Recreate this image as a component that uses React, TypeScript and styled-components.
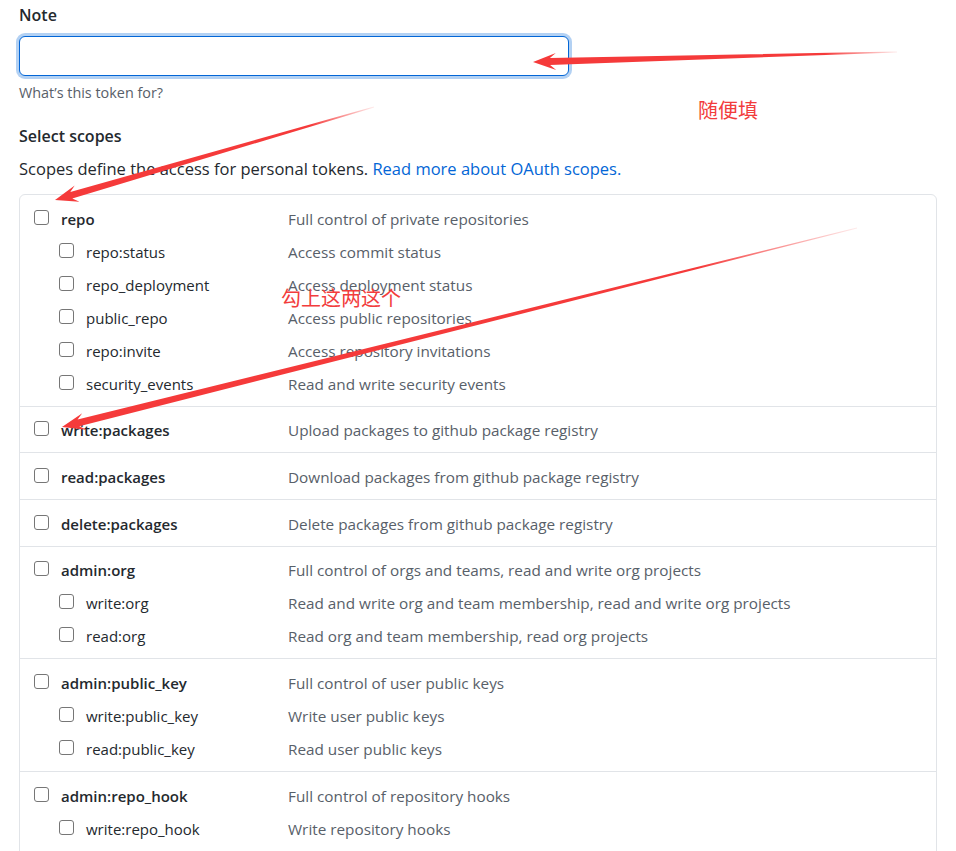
import React from 'react';
import styled, { createGlobalStyle } from 'styled-components';

type Scope = { name: string; desc: string; children?: [string, string][] };

const scopes: Scope[] = [
  {
    name: 'repo',
    desc: 'Full control of private repositories',
    children: [
      ['repo:status', 'Access commit status'],
      ['repo_deployment', 'Access deployment status'],
      ['public_repo', 'Access public repositories'],
      ['repo:invite', 'Access repository invitations'],
      ['security_events', 'Read and write security events'],
    ],
  },
  { name: 'write:packages', desc: 'Upload packages to github package registry' },
  { name: 'read:packages', desc: 'Download packages from github package registry' },
  { name: 'delete:packages', desc: 'Delete packages from github package registry' },
  {
    name: 'admin:org',
    desc: 'Full control of orgs and teams, read and write org projects',
    children: [
      ['write:org', 'Read and write org and team membership, read and write org projects'],
      ['read:org', 'Read org and team membership, read org projects'],
    ],
  },
  {
    name: 'admin:public_key',
    desc: 'Full control of user public keys',
    children: [
      ['write:public_key', 'Write user public keys'],
      ['read:public_key', 'Read user public keys'],
    ],
  },
  {
    name: 'admin:repo_hook',
    desc: 'Full control of repository hooks',
    children: [
      ['write:repo_hook', 'Write repository hooks'],
      ['read:repo_hook', 'Read repository hooks'],
    ],
  },
];

const GlobalStyle = createGlobalStyle`
  body {
    margin: 0;
    background: #fff;
    font-family: "Open Sans", "Liberation Sans", sans-serif;
    color: #24292e;
  }
`;

const Page = styled.div`
  position: relative;
  width: 956px;
  height: 851px;
  overflow: hidden;
  padding: 0 19px;
  box-sizing: border-box;
`;

const Label = styled.div<{ $top: number }>`
  margin-top: ${(p) => p.$top}px;
  font-size: 16px;
  font-weight: 600;
  line-height: 24px;
`;

const NoteInput = styled.input`
  display: block;
  margin-top: 9px;
  width: 550px;
  height: 40px;
  box-sizing: border-box;
  border: 1px solid #0366d6;
  border-radius: 6px;
  box-shadow: 0 0 0 3px rgba(3, 102, 214, 0.3);
  outline: none;
  font: inherit;
  padding: 0 10px;
`;

const Hint = styled.p`
  margin: 6px 0 0;
  font-size: 14.4px;
  line-height: 22px;
  color: #586069;
`;

const Lead = styled.p`
  margin: 9px 0 0;
  font-size: 16.5px;
  line-height: 24px;
`;

const Link = styled.a`
  color: #0366d6;
  text-decoration: none;
`;

const ScopeTable = styled.div`
  margin-top: 13px;
  border: 1px solid #e1e4e8;
  border-radius: 6px;
`;

const Group = styled.div`
  padding: 7px 0 5.7px 14px;
  & + & {
    border-top: 1px solid #e1e4e8;
  }
`;

const Row = styled.div`
  display: flex;
  align-items: center;
  height: 33px;
  font-size: 15px;
`;

const NameCell = styled.label<{ $child?: boolean }>`
  display: flex;
  align-items: center;
  gap: 12px;
  width: 254px;
  padding-left: ${(p) => (p.$child ? 25 : 0)}px;
  box-sizing: border-box;
  font-weight: ${(p) => (p.$child ? 400 : 600)};
  color: #24292e;
`;

const Box = styled.input`
  appearance: none;
  margin: 0 0 3px;
  width: 15px;
  height: 15px;
  border: 1px solid #767676;
  border-radius: 3px;
  background: #fff;
  flex-shrink: 0;
`;

const Desc = styled.span`
  font-size: 15.3px;
  color: #586069;
`;

const Overlay = styled.svg`
  position: absolute;
  left: 0;
  top: 0;
  pointer-events: none;
`;

const Remark = styled.span<{ $x: number; $y: number }>`
  position: absolute;
  left: ${(p) => p.$x}px;
  top: ${(p) => p.$y}px;
  font-family: "Noto Sans CJK SC", sans-serif;
  font-size: 20px;
  line-height: 1;
  color: #f23c3c;
`;

type Pt = [number, number];

function arrow(tail: Pt, tip: Pt, headLen: number, headW: number, shaftW: number) {
  const dx = tip[0] - tail[0];
  const dy = tip[1] - tail[1];
  const len = Math.hypot(dx, dy);
  const ux = dx / len;
  const uy = dy / len;
  const nx = -uy;
  const ny = ux;
  const bx = tip[0] - ux * headLen;
  const by = tip[1] - uy * headLen;
  const wx = bx + ux * 4;
  const wy = by + uy * 4;
  const pts: Pt[] = [
    [tail[0] + nx * 0.4, tail[1] + ny * 0.4],
    [wx + (nx * shaftW) / 2, wy + (ny * shaftW) / 2],
    [bx - ux * 2 + (nx * headW) / 2, by - uy * 2 + (ny * headW) / 2],
    tip,
    [bx - ux * 2 - (nx * headW) / 2, by - uy * 2 - (ny * headW) / 2],
    [wx - (nx * shaftW) / 2, wy - (ny * shaftW) / 2],
    [tail[0] - nx * 0.4, tail[1] - ny * 0.4],
  ];
  return pts.map((p) => `${p[0].toFixed(1)},${p[1].toFixed(1)}`).join(' ');
}

const arrows: { id: string; tail: Pt; tip: Pt }[] = [
  { id: 'a1', tail: [897, 52], tip: [533, 62] },
  { id: 'a2', tail: [374, 107], tip: [55, 200] },
  { id: 'a3', tail: [857, 228], tip: [62, 427] },
];

const Annotations = () => (
  <Overlay width="956" height="851" viewBox="0 0 956 851">
    <defs>
      {arrows.map((a) => (
        <linearGradient
          key={a.id}
          id={a.id}
          gradientUnits="userSpaceOnUse"
          x1={a.tail[0]}
          y1={a.tail[1]}
          x2={a.tip[0]}
          y2={a.tip[1]}
        >
          <stop offset="0" stopColor="#f53a3a" stopOpacity="0.1" />
          <stop offset="0.2" stopColor="#f53a3a" stopOpacity="1" />
          <stop offset="1" stopColor="#f53a3a" stopOpacity="1" />
        </linearGradient>
      ))}
    </defs>
    {arrows.map((a) => (
      <polygon key={a.id} points={arrow(a.tail, a.tip, 21, 17, 7)} fill={`url(#${a.id})`} />
    ))}
  </Overlay>
);

export default function App() {
  return (
    <Page>
      <GlobalStyle />
      <Label $top={3}>Note</Label>
      <NoteInput type="text" />
      <Hint>What’s this token for?</Hint>
      <Label $top={20}>Select scopes</Label>
      <Lead>
        Scopes define the access for personal tokens. <Link href="#">Read more about OAuth scopes.</Link>
      </Lead>
      <ScopeTable>
        {scopes.map((s) => (
          <Group key={s.name}>
            <Row>
              <NameCell>
                <Box type="checkbox" />
                {s.name}
              </NameCell>
              <Desc>{s.desc}</Desc>
            </Row>
            {s.children?.map(([name, desc]) => (
              <Row key={name}>
                <NameCell $child>
                  <Box type="checkbox" />
                  {name}
                </NameCell>
                <Desc>{desc}</Desc>
              </Row>
            ))}
          </Group>
        ))}
      </ScopeTable>
      <Annotations />
      <Remark $x={698} $y={100}>随便填</Remark>
      <Remark $x={281} $y={288}>勾上这两这个</Remark>
    </Page>
  );
}
